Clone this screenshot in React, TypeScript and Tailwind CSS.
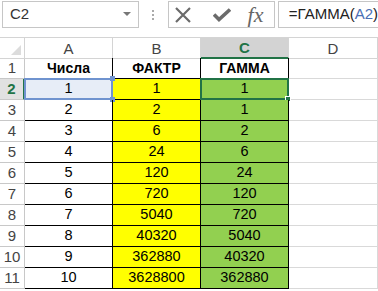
import React from 'react';

const ROWS = [
  ['1', '1', '1'],
  ['2', '2', '1'],
  ['3', '6', '2'],
  ['4', '24', '6'],
  ['5', '120', '24'],
  ['6', '720', '120'],
  ['7', '5040', '720'],
  ['8', '40320', '5040'],
  ['9', '362880', '40320'],
  ['10', '3628800', '362880'],
];

const font = { fontFamily: '"Liberation Sans", Arial, sans-serif' };

const FormulaBar: React.FC = () => (
  <div className="flex h-[37px] items-start pt-[1px] bg-white">
    <div className="ml-[2px] flex h-[27px] w-[140px] items-center border border-[#c6c6c6] pl-[7px] text-[15px] text-[#333]">
      <span className="flex-1">C2</span>
      <svg width="8" height="5" viewBox="0 0 8 5" className="mr-[7px]">
        <path d="M0 0 L8 0 L4 4 Z" fill="#777" />
      </svg>
    </div>
    <div className="ml-[13px] flex h-[27px] w-[3px] flex-col items-center justify-center gap-[2px]">
      <span className="h-[2px] w-[2px] bg-[#aaa]" />
      <span className="h-[2px] w-[2px] bg-[#aaa]" />
      <span className="h-[2px] w-[2px] bg-[#aaa]" />
    </div>
    <div className="ml-[13px] flex h-[27px] w-[110px] items-center border border-[#c6c6c6]">
      <svg width="20" height="16" viewBox="0 0 20 16" className="ml-[4px]">
        <path d="M3 1 L17 15 M17 1 L3 15" stroke="#6b6b6b" strokeWidth="2.2" />
      </svg>
      <svg width="18" height="14" viewBox="0 0 18 14" className="ml-[20px]">
        <path d="M1 6.5 L6 11.5 L17 1.5" stroke="#6b6b6b" strokeWidth="3.6" fill="none" />
      </svg>
      <span
        className="ml-[17px] text-[22px] italic leading-none text-[#666]"
        style={{ fontFamily: '"Liberation Serif", "DejaVu Serif", serif' }}
      >
        fx
      </span>
    </div>
    <div className="ml-[3px] flex h-[27px] flex-1 items-center border border-r-0 border-[#c6c6c6] pl-[10px] text-[15px] text-[#222]">
      =ГАММА(<span className="text-[#4a6fb5]">A2</span>)
    </div>
  </div>
);

const App: React.FC = () => {
  return (
    <div className="h-[291px] w-[378px] overflow-hidden bg-white" style={font}>
      <FormulaBar />
      <div className="grid grid-cols-[25px_88px_88px_88px_1fr] auto-rows-[21px]">
        {/* column headers */}
        <div className="relative h-[22px] border-t border-r border-b border-[#d4d4d4]">
          <svg width="10" height="10" viewBox="0 0 10 10" className="absolute bottom-[3px] right-[3px]">
            <path d="M10 0 L10 10 L0 10 Z" fill="#dcdcdc" />
          </svg>
        </div>
        {['A', 'B', 'C', 'D'].map((c) => (
          <div
            key={c}
            className={`flex h-[22px] items-center justify-center border-t border-[#d4d4d4] pt-[2px] text-[15px] ${
              c === 'C'
                ? 'border-r border-b-[2px] border-b-[#217346] bg-[#d3d3d3] font-bold text-[#217346]'
                : 'border-r border-b text-[#444]'
            }`}
          >
            {c}
          </div>
        ))}

        {/* row 1 */}
        <div className="flex items-center justify-center border-r border-b border-[#c8c8c8] text-[15px] text-[#444]">1</div>
        <div className="flex items-center justify-center border-r border-b border-black text-[14px] font-bold text-black">Числа</div>
        <div className="flex items-center justify-center border-r border-b border-black text-[14px] font-bold text-black">ФАКТР</div>
        <div className="flex items-center justify-center border-r border-b border-black text-[14px] font-bold text-black">ГАММА</div>
        <div className="border-r border-b border-[#d9d9d9]" />

        {ROWS.map((r, i) => {
          const rowNum = i + 2;
          const active = rowNum === 2;
          return (
            <React.Fragment key={rowNum}>
              <div
                className={`flex items-center justify-center border-b border-[#c8c8c8] text-[15px] ${
                  active ? 'border-r-[2px] border-r-[#217346] bg-[#e1e1e1] font-bold text-[#217346]' : 'border-r text-[#444]'
                }`}
              >
                {rowNum}
              </div>
              <div
                className={`relative flex items-center justify-center border-r border-b border-black text-[14.5px] text-black ${
                  active ? 'bg-[#e7edf7]' : ''
                }`}
              >
                {r[0]}
                {active && (
                  <div className="absolute inset-[-1px] border-[2px] border-[#6f93cf]">
                    <span className="absolute -right-[4px] -top-[4px] h-[5px] w-[5px] bg-[#6f93cf]" />
                    <span className="absolute -bottom-[4px] -right-[4px] h-[5px] w-[5px] bg-[#6f93cf]" />
                  </div>
                )}
              </div>
              <div className="flex items-center justify-center border-r border-b border-black bg-[#ffff00] text-[14.5px] text-black">
                {r[1]}
              </div>
              <div className="relative flex items-center justify-center border-r border-b border-black bg-[#92d050] text-[14.5px] text-black">
                {r[2]}
                {active && (
                  <div className="absolute inset-[-1px] border-[2px] border-[#217346]">
                    <span className="absolute -bottom-[4px] -right-[4px] h-[6px] w-[6px] border border-white bg-[#217346]" />
                  </div>
                )}
              </div>
              <div className="border-r border-b border-[#d9d9d9]" />
            </React.Fragment>
          );
        })}
      </div>
    </div>
  );
};

export default App;
